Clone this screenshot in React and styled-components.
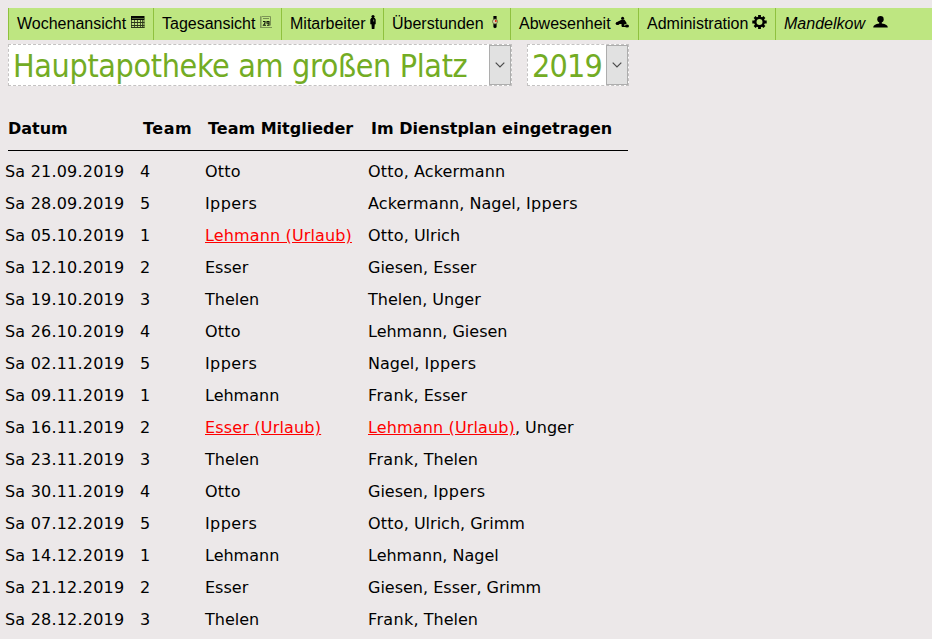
import React from "react";
import styled, { createGlobalStyle } from "styled-components";

const Global = createGlobalStyle`
  * { box-sizing: border-box; }
  html { overflow: hidden; }
  body {
    margin: 0;
    background: #ece8e9;
    color: #000;
    font: 16px/20px "DejaVu Sans", Verdana, sans-serif;
    overflow: hidden;
  }
`;

const Page = styled.div`
  height: 639px;
  padding-top: 8px;
  overflow: hidden;
`;

const Nav = styled.nav`
  display: flex;
  height: 32px;
  margin-left: 8px;
  background: #bee681;
  font-family: "Liberation Sans", Arial, sans-serif;
`;

const NavItem = styled.a`
  display: flex;
  align-items: flex-start;
  width: ${(p) => p.$width}px;
  padding: 6px 0 0 8px;
  border-left: 1px solid #8fc13f;
  font-style: ${(p) => (p.$italic ? "italic" : "normal")};
  white-space: nowrap;
`;

const NavIcon = styled.svg`
  flex: none;
  width: ${(p) => p.$w}px;
  height: 18px;
  margin: -1px 0 0 ${(p) => p.$gap}px;
`;

const Selectors = styled.div`
  display: flex;
  gap: 15px;
  margin: 4px 0 0 8px;
`;

const Select = styled.div`
  display: flex;
  justify-content: space-between;
  width: ${(p) => p.$width}px;
  height: 42px;
  padding-left: 4px;
  border: 1px dashed #c4c2c2;
  background: #fff;
  color: #73ac24;
  font-family: "DejaVu Sans Condensed", "DejaVu Sans", Tahoma, sans-serif;
  font-stretch: condensed;
  font-size: 32px;
  line-height: 42px;
  letter-spacing: ${(p) => p.$track}px;
  white-space: nowrap;
`;

const Arrow = styled.span`
  display: flex;
  flex: none;
  align-items: center;
  justify-content: center;
  width: 22px;
  height: 40px;
  border: 1px solid #adadad;
  background: #e1e1e1;
`;

const Table = styled.div`
  width: 620px;
  margin: 33px 0 0 8px;
`;

const columns = "135px 65px 163px 1fr";

const Head = styled.div`
  display: grid;
  grid-template-columns: ${columns};
  height: 32px;
  border-bottom: 1px solid #000;
  font-weight: bold;
  white-space: nowrap;
`;

const Row = styled.div`
  display: grid;
  grid-template-columns: ${columns};
  height: 32px;
  margin-left: -3px;
  white-space: nowrap;
`;

const Body = styled.div`
  padding-top: 11px;
`;

const Cell = styled.span`
  letter-spacing: ${(p) => p.$track || 0}px;
`;

const Name = styled.span`
  letter-spacing: ${(p) => p.$track || 0}px;
`;

const Absent = styled(Name)`
  color: #f00;
  text-decoration: underline;
`;

const MonthIcon = () => (
  <NavIcon $w={14} $gap={5} viewBox="0 0 14 18">
    <path d="M0 3h13.5v4H0z" fill="#080a04" />
    <path d="M1 5.5h12" stroke="#56683a" />
    <path d="M.5 7v8M13 7v8M3.5 7v8M6.5 7v8M9.5 7v8M11.5 7v8" stroke="#4a5a32" fill="none" />
    <path d="M0 9.5h13.5M0 12.5h13.5M0 14.5h13.5" stroke="#2c381b" fill="none" />
  </NavIcon>
);

const DayIcon = () => (
  <NavIcon $w={12} $gap={5} viewBox="0 0 12 18">
    <path d="M.5 14V3.5h10v9M0 14.5h12" fill="none" stroke="#7d9656" />
    <path d="M1.5 3v11" stroke="#9ab96a" />
    <path d="M3 5.5h6" stroke="#758d50" />
    <path d="M3 8.5h2v1.5L3.5 12.3H6M7 8.5h2v1.8H7zM9 10v2.3H7" stroke="#11170a" strokeWidth="1.1" fill="none" />
  </NavIcon>
);

const PersonIcon = () => (
  <NavIcon $w={6} $gap={4} viewBox="0 0 6 18">
    <circle cx="3" cy="3.6" r="1.6" />
    <path d="M1.2 5h3.6l.9 1.5v4.7h-.9l-.4 4.8H1.8l-.3-4.8H.3V6.5z" />
    <path d="M3.7 6.5v2" stroke="#b9d98a" strokeWidth=".7" />
  </NavIcon>
);

const WatchIcon = () => (
  <NavIcon $w={6} $gap={8} viewBox="0 0 6 18">
    <path d="M1.4 3h3.2v3H1.4zM1.4 11h3.2v3.2l-1.6 1-1.6-1z" />
    <circle cx="3" cy="8.5" r="2.5" fill="#d4cfa8" stroke="#5b6436" strokeWidth=".8" />
    <path d="M3 7h1.6v2H3z" fill="#e12b16" />
  </NavIcon>
);

const AbsenceIcon = () => (
  <NavIcon $w={14} $gap={4} viewBox="0 0 14 18">
    <circle cx="7.6" cy="5.2" r="1.5" />
    <ellipse cx="2.6" cy="10.4" rx="2" ry="1.5" />
    <path d="M1 9.5 7 6.5l2.5.3 2 3v1.4H9.3v2.3H6.5V11H3z" />
    <ellipse cx="12" cy="13" rx="2" ry="1.5" />
    <path d="M7 12.5 12 13v1H7z" />
  </NavIcon>
);

const GearIcon = () => (
  <NavIcon $w={15} $gap={4} viewBox="0 0 15 18">
    <circle cx="7.5" cy="9" r="4.2" fill="none" stroke="#000" strokeWidth="2.4" />
    <path d="M7.5 2v3M7.5 13v3M.3 9h3M11.7 9h3M2.6 4.1l2 2M10.4 11.9l2 2M12.4 4.1l-2 2M4.6 11.9l-2 2" stroke="#000" strokeWidth="2.8" />
  </NavIcon>
);

const UserIcon = () => (
  <NavIcon $w={15} $gap={8} viewBox="0 0 15 18">
    <ellipse cx="7.5" cy="6.2" rx="3.2" ry="3.3" />
    <path d="M6.2 9h2.6v1.6q6 .9 6 4H.2q0-3.1 6-4z" />
  </NavIcon>
);

const Chevron = () => (
  <svg width="10" height="6" viewBox="0 0 10 6">
    <path d="M.7.7 5 5 9.3.7" fill="none" stroke="#4b4b4b" strokeWidth="1.2" />
  </svg>
);

const nav = [
  ["Wochenansicht", 145, MonthIcon],
  ["Tagesansicht", 128, DayIcon],
  ["Mitarbeiter", 102, PersonIcon],
  ["Überstunden", 127, WatchIcon],
  ["Abwesenheit", 128, AbsenceIcon],
  ["Administration", 137, GearIcon],
  ["Mandelkow", 157, UserIcon, true],
];

const rows = [
  ["21.09.2019", 4, "Otto", "Otto, Ackermann"],
  ["28.09.2019", 5, "Ippers", "Ackermann, Nagel, Ippers"],
  ["05.10.2019", 1, "Lehmann (Urlaub)", "Otto, Ulrich"],
  ["12.10.2019", 2, "Esser", "Giesen, Esser"],
  ["19.10.2019", 3, "Thelen", "Thelen, Unger"],
  ["26.10.2019", 4, "Otto", "Lehmann, Giesen"],
  ["02.11.2019", 5, "Ippers", "Nagel, Ippers"],
  ["09.11.2019", 1, "Lehmann", "Frank, Esser"],
  ["16.11.2019", 2, "Esser (Urlaub)", "Lehmann (Urlaub), Unger"],
  ["23.11.2019", 3, "Thelen", "Frank, Thelen"],
  ["30.11.2019", 4, "Otto", "Giesen, Ippers"],
  ["07.12.2019", 5, "Ippers", "Otto, Ulrich, Grimm"],
  ["14.12.2019", 1, "Lehmann", "Lehmann, Nagel"],
  ["21.12.2019", 2, "Esser", "Giesen, Esser, Grimm"],
  ["28.12.2019", 3, "Thelen", "Frank, Thelen"],
];

const tracking = {
  Ippers: 0.4,
  Frank: 0.35,
  Otto: 0.2,
  Ackermann: 0.15,
  "Lehmann (Urlaub)": 0.14,
  "Esser (Urlaub)": 0.18,
};

const Names = ({ list }) =>
  list.split(", ").map((name, i) => {
    const Part = name.endsWith("(Urlaub)") ? Absent : Name;
    return (
      <React.Fragment key={name}>
        {i > 0 && ", "}
        <Part $track={tracking[name]}>{name}</Part>
      </React.Fragment>
    );
  });

export default function App() {
  return (
    <Page>
      <Global />
      <Nav>
        {nav.map(([label, width, Icon, italic]) => (
          <NavItem key={label} $width={width} $italic={italic}>
            {label}
            <Icon />
          </NavItem>
        ))}
      </Nav>
      <Selectors>
        <Select $width={504} $track={-0.36}>
          Hauptapotheke am großen Platz
          <Arrow><Chevron /></Arrow>
        </Select>
        <Select $width={102} $track={-0.8}>
          2019
          <Arrow><Chevron /></Arrow>
        </Select>
      </Selectors>
      <Table>
        <Head>
          <Cell>Datum</Cell>
          <Cell $track={0.5}>Team</Cell>
          <Cell>Team Mitglieder</Cell>
          <Cell>Im Dienstplan eingetragen</Cell>
        </Head>
        <Body>
          {rows.map(([date, team, members, planned]) => (
            <Row key={date}>
              <Cell $track={0.2}>Sa {date}</Cell>
              <Cell>{team}</Cell>
              <Cell><Names list={members} /></Cell>
              <Cell><Names list={planned} /></Cell>
            </Row>
          ))}
        </Body>
      </Table>
    </Page>
  );
}
